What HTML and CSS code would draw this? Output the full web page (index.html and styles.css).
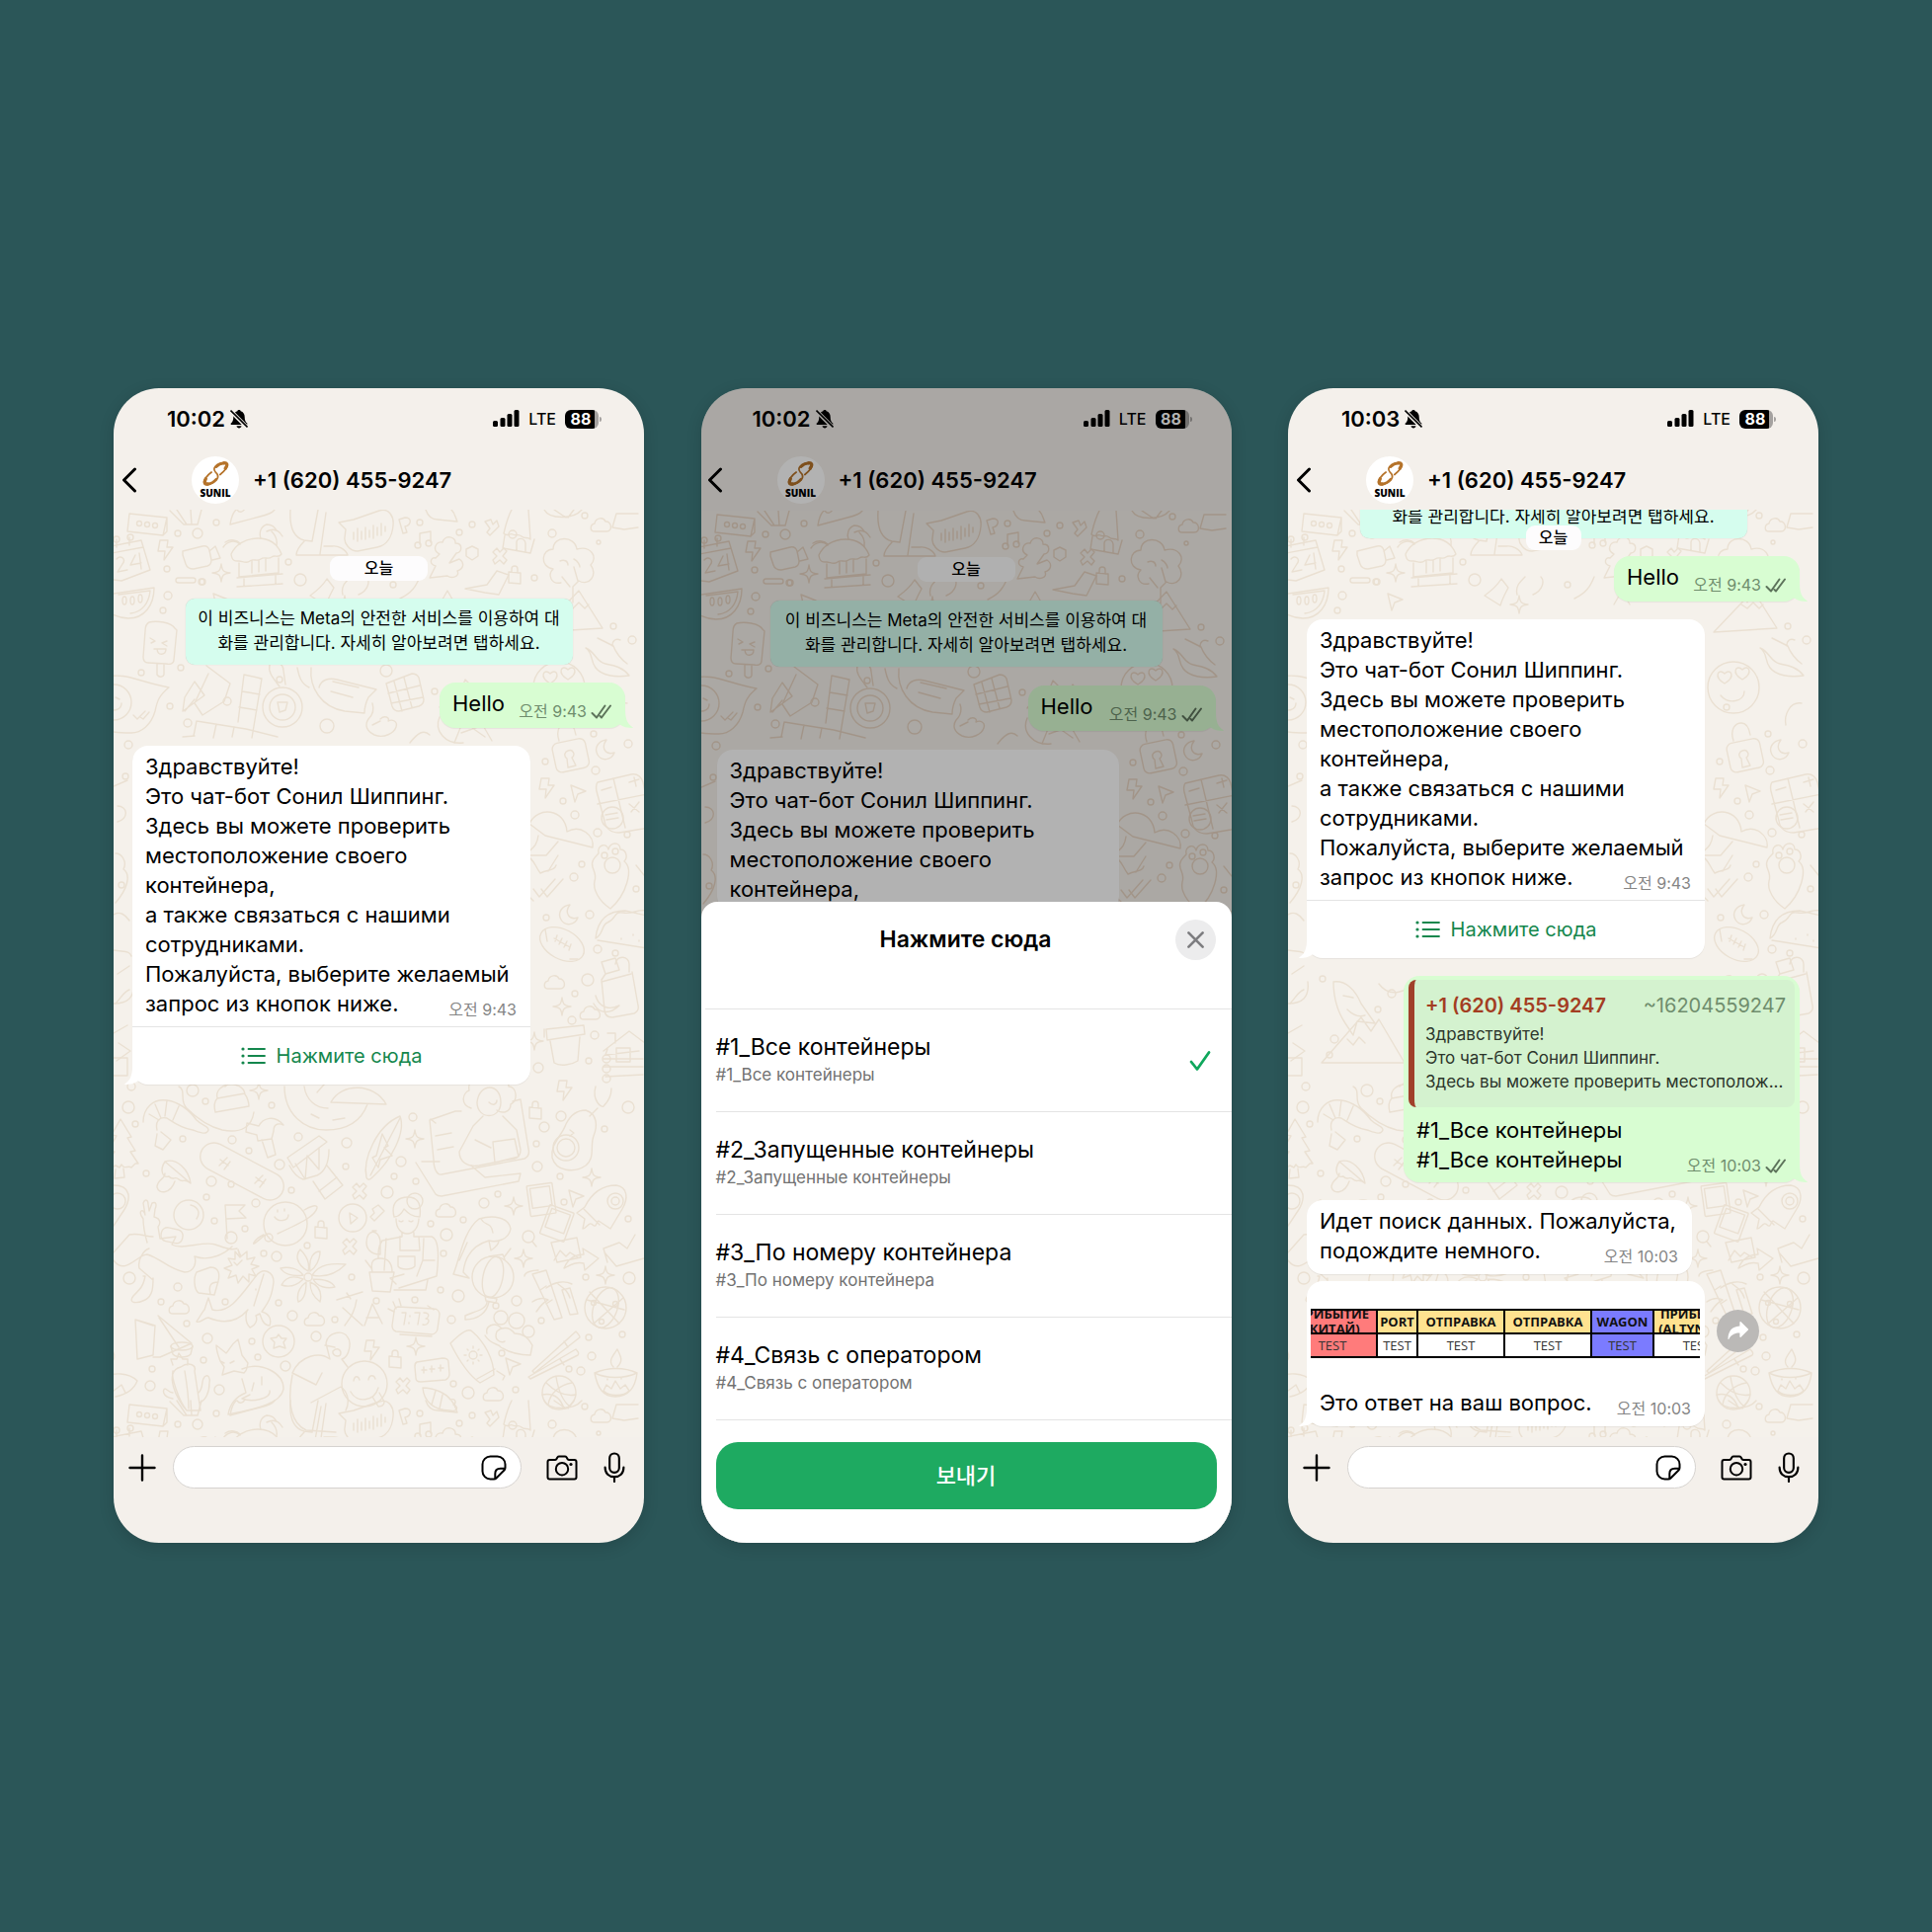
FILE: index.html
```html
<!DOCTYPE html>
<html lang="ru">
<head>
<meta charset="utf-8">
<meta name="viewport" content="width=device-width, initial-scale=1">
<title>Sonil Shipping chat bot</title>
<link rel="stylesheet" href="styles.css">
</head>
<body>
<svg class="sprite" aria-hidden="true">
  <defs>
    <symbol id="i-muted" viewBox="0 0 18 20">
      <path d="M9 1c.9 0 1.500.5 1.700 1.200 2.600.8 4 3 4 5.800 0 3.500.8 5 2.500 6.600.5.600.2 1.400-.6 1.400H1.400c-.8 0-1.100-.8-.6-1.400C2.500 13 3.300 11.500 3.300 8c0-2.800 1.400-5 4-5.800C7.500 1.500 8.100 1 9 1z" fill="#000"/>
      <path d="M6.500 17.300h5c-.3 1.300-1.200 2.200-2.500 2.200s-2.200-.9-2.500-2.200z" fill="#000"/>
      <path d="M0 1.500l17.500 17.500" stroke="var(--surface)" stroke-width="4"/>
      <path d="M.5 1.500l17 17" stroke="#000" stroke-width="1.600"/>
    </symbol>
    <symbol id="i-signal" viewBox="0 0 27 18">
      <rect x="0" y="11" width="5" height="6" rx="1.500"/><rect x="7.500" y="8" width="5" height="9" rx="1.500"/><rect x="14.500" y="4" width="5" height="13" rx="1.500"/><rect x="21.500" y="0" width="5" height="17" rx="1.500"/>
    </symbol>
    <symbol id="i-back" viewBox="0 0 16 26"><path d="M13.500 2L2.500 13l11 11" fill="none" stroke="#000" stroke-width="3" stroke-linecap="round" stroke-linejoin="round"/></symbol>
    <symbol id="i-logo" viewBox="-1 -1 30 28">
      <g fill="none" stroke="#b5732a" stroke-linecap="round">
        <path stroke-width="1.800" d="M9.500 11.500C4.500 15 .5 20.500 1.800 23.500c1.400 2.800 9 .8 13-4 3-3.800 1.200-6-1-8-2.600-2.500-1.800-5.300 1.700-8C19 1 25 .4 26 3c.8 2.500-2.500 7-7.500 11"/>
        <path stroke-width="3.400" d="M3.500 18.500C1.800 21.500 2 24 5.500 23.800M22.500 2c3.500-.4 4.300 1.500 1.500 5.500"/>
        <path stroke-width="2.600" d="M5.500 23.800c3-.2 6.500-2 9-5M22.500 2c-3 .2-6 1.700-8 4"/>
      </g>
    </symbol>
    <symbol id="i-ticks" viewBox="0 0 22 15"><path d="M1.500 9l4.500 4.500L14.500 1.500M9.500 12l1.500 1.500 9-12" fill="none" stroke="currentColor" stroke-width="2" stroke-linecap="round" stroke-linejoin="round"/></symbol>
    <symbol id="i-list" viewBox="0 0 25 18"><path d="M7.500 2H24M7.500 9H24M7.500 16H24" stroke="currentColor" stroke-width="1.800" stroke-linecap="round"/><g fill="currentColor"><circle cx="2" cy="2" r="1.600"/><circle cx="2" cy="9" r="1.600"/><circle cx="2" cy="16" r="1.600"/></g></symbol>
    <symbol id="i-plus" viewBox="0 0 28 28"><path d="M14 1.500v25M1.500 14h25" stroke="#000" stroke-width="2.400" stroke-linecap="round"/></symbol>
    <symbol id="i-sticker" viewBox="0 0 26 26"><path d="M9.500 1.500h7a8 8 0 0 1 8 8v3.600c0 .8-.2 1.500-.8 2.100l-8.500 8.500c-.6.600-1.300.8-2.100.8H9.500a8 8 0 0 1-8-8v-7a8 8 0 0 1 8-8z M24.300 13.700h-4.600c-3.700 0-5.400 1.800-5.400 5.400v5.200" fill="none" stroke="#000" stroke-width="2" stroke-linejoin="round"/></symbol>
    <symbol id="i-camera" viewBox="0 0 32 26"><path d="M3.500 5h5.300c.7 0 1.200-.3 1.600-.9l1.100-1.800c.4-.6.900-.9 1.600-.9h5.800c.7 0 1.200.3 1.600.9l1.100 1.800c.4.600.9.900 1.600.9h5.300c1.200 0 2 .8 2 2v15.600c0 1.200-.8 2-2 2h-25c-1.200 0-2-.8-2-2V7c0-1.200.8-2 2-2z" fill="none" stroke="#000" stroke-width="2"/><circle cx="16" cy="14.200" r="6.200" fill="none" stroke="#000" stroke-width="2"/><circle cx="25" cy="9.500" r="1.600"/></symbol>
    <symbol id="i-mic" viewBox="0 0 22 32"><rect x="6" y="1.500" width="10" height="20" rx="5" fill="none" stroke="#000" stroke-width="2.200"/><path d="M1.300 16c0 6.500 4 10 9.700 10s9.700-3.500 9.700-10M11 26v5" fill="none" stroke="#000" stroke-width="2.200" stroke-linecap="round"/></symbol>
    <symbol id="i-close" viewBox="0 0 20 20"><path d="M2.500 2.500l15 15M17.500 2.500l-15 15" stroke="#7d7d80" stroke-width="2.800" stroke-linecap="round"/></symbol>
    <symbol id="i-check" viewBox="0 0 22 22"><path d="M2 12l6 7.500L20 2.500" fill="none" stroke="#0fa75c" stroke-width="2.800" stroke-linecap="round" stroke-linejoin="round"/></symbol>
    <symbol id="i-forward" viewBox="0 0 24 22"><path d="M13.500 1.500c0-.8.8-1 1.300-.5l8 7.700c.4.400.4.900 0 1.300l-8 7.700c-.5.500-1.300.3-1.300-.5v-4C7.500 13 4 15.500 1.500 20c-.3.500-1 .4-1-.3C.7 11.500 4.500 6 13.500 5.500z" fill="#fff"/></symbol>
    <symbol id="i-tail" viewBox="0 0 20 18"><path d="M8 0C8 8 6 14 .5 17.200c-.4.300-.3.800.3.800C6 18 10.500 17 13.500 14.500L20 12V0z" fill="currentColor"/></symbol>

    <path id="d-star" d="M0-9C1-2 2-1 9 0C2 1 1 2 0 9C-1 2-2 1-9 0C-2-1-1-2 0-9z"/>
    <path id="d-cloud" d="M-8 6c-5 0-5-7 0-8c1-6 9-7 11-2c6-1 8 10 1 10z"/>
    <path id="d-arrow" d="M-7-7l15 6-8 3-3 8z"/>
    <path id="d-bolt" d="M-5-9h8l-1 7h6l-9 13 1-9h-7z"/>
    <path id="d-lock" d="M-6-3l12 1v11l-12-1zM-3-3v-3c0-4 6-4 6 0v4"/>
    <path id="d-cross" d="M-3-8l3 4 4-4 3 3-4 5 4 4-3 4-4-4-5 4-2-4 4-4-4-4z"/>
    <path id="d-heart" d="M0 6C-12-1-6-10 0-4C6-10 12-1 0 6z"/>
    <path id="d-moon" d="M2-10c-8 1-13 8-9 15s14 6 17-2c-9 3-14-5-8-13z"/>
    <g id="d-photo"><rect x="-13" y="-15" width="26" height="31" rx="1"/><rect x="-10" y="-12" width="20" height="20"/></g>

    <g id="doodles" fill="none" stroke="currentColor" stroke-width="1.400" stroke-linejoin="round" stroke-linecap="round">
      <!-- loose dots -->
      <g>
        <circle cx="104" cy="13" r="3"/><circle cx="65" cy="24" r="3"/><circle cx="85" cy="24" r="5"/><circle cx="310" cy="13" r="3"/><circle cx="350" cy="23" r="3"/><circle cx="363" cy="15" r="3"/><circle cx="477" cy="6" r="3"/><circle cx="444" cy="24" r="4"/><circle cx="491" cy="33" r="2"/><circle cx="54" cy="60" r="3"/><circle cx="90" cy="73" r="3"/><circle cx="177" cy="53" r="3"/><circle cx="189" cy="71" r="6"/><circle cx="283" cy="76" r="3"/><circle cx="426" cy="69" r="3"/><circle cx="55" cy="87" r="4"/><circle cx="50" cy="102" r="3"/><circle cx="444" cy="200" r="3"/><circle cx="506" cy="118" r="3"/><circle cx="525" cy="132" r="4"/><circle cx="68" cy="160" r="3"/><circle cx="28" cy="165" r="3"/><circle cx="57" cy="199" r="3"/><circle cx="115" cy="194" r="4"/><circle cx="75" cy="216" r="4"/><circle cx="216" cy="219" r="7"/><circle cx="276" cy="163" r="6"/><circle cx="325" cy="184" r="3"/><circle cx="15" cy="238" r="4"/><circle cx="486" cy="227" r="3"/><circle cx="521" cy="237" r="4"/>
        <circle cx="437" cy="255" r="3"/><circle cx="488" cy="264" r="4"/><circle cx="455" cy="295" r="3"/><circle cx="467" cy="309" r="4"/><circle cx="490" cy="327" r="4"/><circle cx="520" cy="329" r="3"/><circle cx="474" cy="359" r="3"/><circle cx="466" cy="372" r="4"/><circle cx="529" cy="384" r="3"/><circle cx="482" cy="410" r="4"/><circle cx="438" cy="413" r="3"/><circle cx="490" cy="445" r="4"/><circle cx="508" cy="449" r="3"/><circle cx="480" cy="476" r="6"/><circle cx="467" cy="490" r="3"/><circle cx="464" cy="517" r="4"/><circle cx="487" cy="532" r="4"/><circle cx="430" cy="565" r="5"/><circle cx="481" cy="558" r="3"/><circle cx="8" cy="380" r="3"/><circle cx="12" cy="270" r="3"/>
        <circle cx="35" cy="475" r="3"/><circle cx="105" cy="490" r="4"/><circle cx="91" cy="506" r="3"/><circle cx="47" cy="536" r="4"/><circle cx="42" cy="552" r="3"/><circle cx="18" cy="584" r="4"/><circle cx="15" cy="605" r="6"/><circle cx="80" cy="588" r="6"/><circle cx="93" cy="599" r="3"/><circle cx="22" cy="622" r="3"/><circle cx="70" cy="637" r="3"/><circle cx="160" cy="603" r="3"/><circle cx="120" cy="638" r="4"/><circle cx="187" cy="635" r="4"/><circle cx="137" cy="649" r="3"/><circle cx="168" cy="663" r="5"/><circle cx="236" cy="641" r="5"/><circle cx="235" cy="665" r="3"/><circle cx="303" cy="615" r="4"/><circle cx="291" cy="660" r="5"/><circle cx="284" cy="675" r="3"/><circle cx="306" cy="680" r="3"/><circle cx="277" cy="691" r="6"/><circle cx="33" cy="672" r="3"/><circle cx="99" cy="680" r="5"/><circle cx="119" cy="683" r="3"/><circle cx="94" cy="696" r="3"/><circle cx="144" cy="702" r="4"/><circle cx="180" cy="689" r="3"/><circle cx="102" cy="720" r="3"/><circle cx="133" cy="728" r="3"/><circle cx="375" cy="702" r="5"/><circle cx="354" cy="719" r="3"/><circle cx="389" cy="693" r="3"/><circle cx="429" cy="665" r="5"/><circle cx="452" cy="675" r="3"/><circle cx="453" cy="614" r="5"/><circle cx="436" cy="625" r="5"/><circle cx="428" cy="642" r="3"/><circle cx="521" cy="605" r="6"/><circle cx="497" cy="627" r="3"/><circle cx="456" cy="701" r="3"/><circle cx="521" cy="718" r="3"/><circle cx="337" cy="734" r="6"/><circle cx="321" cy="723" r="3"/><circle cx="334" cy="753" r="3"/><circle cx="165" cy="756" r="5"/><circle cx="152" cy="753" r="3"/><circle cx="196" cy="745" r="3"/><circle cx="241" cy="777" r="3"/><circle cx="65" cy="787" r="4"/><circle cx="16" cy="778" r="6"/><circle cx="48" cy="802" r="3"/><circle cx="113" cy="802" r="3"/><circle cx="167" cy="803" r="3"/><circle cx="181" cy="816" r="5"/><circle cx="224" cy="820" r="3"/><circle cx="266" cy="801" r="3"/><circle cx="305" cy="800" r="3"/><circle cx="331" cy="790" r="3"/><circle cx="349" cy="796" r="6"/><circle cx="408" cy="801" r="5"/><circle cx="387" cy="806" r="3"/><circle cx="342" cy="820" r="4"/><circle cx="522" cy="778" r="6"/><circle cx="478" cy="777" r="3"/><circle cx="433" cy="821" r="3"/><circle cx="95" cy="839" r="5"/><circle cx="74" cy="824" r="3"/><circle cx="140" cy="842" r="3"/><circle cx="146" cy="858" r="3"/><circle cx="174" cy="867" r="5"/><circle cx="205" cy="837" r="5"/><circle cx="91" cy="861" r="3"/><circle cx="39" cy="870" r="3"/><circle cx="37" cy="887" r="5"/><circle cx="107" cy="891" r="5"/><circle cx="481" cy="838" r="3"/><circle cx="484" cy="857" r="4"/><circle cx="473" cy="872" r="4"/><circle cx="461" cy="870" r="3"/><circle cx="359" cy="894" r="6"/><circle cx="344" cy="885" r="3"/><circle cx="407" cy="891" r="3"/><circle cx="393" cy="854" r="3"/><circle cx="515" cy="835" r="3"/>
      </g>
      <!-- small marks -->
      <use href="#d-bolt" x="52" y="40"/><use href="#d-star" x="109" y="64"/><use href="#d-cloud" x="495" y="16"/><use href="#d-arrow" x="108" y="92"/><use href="#d-cross" x="391" y="47"/><use href="#d-lock" x="406" y="66"/><use href="#d-star" x="234" y="96"/>
      <use href="#d-bolt" x="438" y="281"/><use href="#d-arrow" x="470" y="286"/><use href="#d-moon" x="497" y="243"/><use href="#d-moon" x="460" y="410"/><use href="#d-cloud" x="448" y="479"/><use href="#d-star" x="454" y="503"/><use href="#d-star" x="426" y="538"/><use href="#d-bolt" x="456" y="587"/><use href="#d-cloud" x="484" y="510"/>
      <use href="#d-star" x="147" y="588"/><use href="#d-star" x="305" y="637"/><use href="#d-lock" x="427" y="608"/><use href="#d-cross" x="249" y="690"/><use href="#d-star" x="484" y="676"/><use href="#d-star" x="405" y="705"/><use href="#d-arrow" x="468" y="696"/><use href="#d-cloud" x="338" y="710"/><use href="#d-lock" x="210" y="729"/><use href="#d-star" x="415" y="758"/><use href="#d-star" x="498" y="775"/><use href="#d-cloud" x="68" y="808"/><use href="#d-cloud" x="205" y="820"/><use href="#d-star" x="306" y="847"/><use href="#d-lock" x="285" y="860"/><use href="#d-arrow" x="404" y="866"/><use href="#d-cross" x="293" y="887"/><use href="#d-cross" x="239" y="746"/><use href="#d-bolt" x="261" y="850"/><use href="#d-cloud" x="386" y="896"/>
      <!-- first rows -->
      <path d="M16 4l38 4-4 18-36-4zM50 26l4-4V8"/><circle cx="26" cy="14" r="2.500"/><circle cx="34" cy="15" r="2.500"/><circle cx="42" cy="16" r="2.500"/>
      <path d="M57 1l14 14h14l4-15M64 0l10 15M78 0l1 15M118 15c1-7 3-12 6-15M118 15l30-8c8-2 13-4 15-7M125 0c3 4 6 2 8-1"/>
      <path d="M179 0c-1 15 2 28 14 31l8 1 6-32M193 32c-6 6-8 10-8 14h52c-2-6-10-10-16-9l-8 0M215 3l-6 42"/>
      <path d="M228 13l15-3 26-9c10-3 15 6 14 15-1 12-7 20-16 22l-20 4c-8 0-14-8-13-14l1-8z"/><path d="M243 23v7M247 19v13M251 22v8M255 18v12M259 21v7M263 16v13M267 18v8M271 14v12M275 17v5"/>
      <path d="M289 10l6-2c8 0 6 8 0 9l2 6-4 1zM310 35v-11l11-2v11"/><circle cx="308" cy="36" r="3"/><circle cx="319" cy="34" r="3"/><path d="M316 0c2 6 6 10 12 10l20 2c-2-4-2-8-6-12M376 12l6-2 2 5 4-4 2 6-9 9-3-3 3-4z"/>
      <path d="M395 24c2-8 3-14 8-24M395 24c4 4 6-1 9 1s6-1 9 2 6 0 9 3l-2-30M396 26l-2 13 28 5 4-14M408 41v-8c0-5 8-5 9 1v8"/><circle cx="404" cy="25" r="4"/>
      <path d="M436 0c5 10 30 10 38 0M446 0l12 8M466 0l-6 8M509 4l22 0M509 4l-4 14 12 2 14-2"/>
      <path d="M-8 38l36-7 9 30-29 11-16-2M3 30v8M16 28v8M-2 44l32-6"/><circle cx="3" cy="30" r="3"/><circle cx="17" cy="28" r="3"/><path d="M3 50c4-5 10 0 6 5l-5 8 10-2M22 46l-5 10 11-2M26 44l2 16"/>
      <path d="M70 42l20-5c4-1 6 1 7 4l2 10c0 3-1 5-4 6l-14 3c-5 0-7-2-8-5l-3-9zM97 42l6-5 5 12-8 2"/>
      <path d="M119 45c4-9 14-16 27-16s20 6 24 16c-4 5-6 0-10 3s-7-1-11 2-8-1-11 2-8 0-11 0-7 1-8-7zM127 54v14l40-4V49M125 69l46-4M132 68v9M164 66v9M125 78l46-3M140 52v12M147 51v12M154 50v12"/><path d="M149 29c-2-6 0-12 6-14 6 0 8 3 10 6M155 22c8-4 13 0 16 5M160 22c4 4 6 8 5 14M111 38c4-6 12-8 17-3M113 33c6-4 12-2 15 1"/>
      <rect x="63" y="69" width="20" height="5" rx="2.500"/><circle cx="89" cy="73" r="3"/>
      <path d="M363 37l6 3v7l-6 4-6-4v-7zM330 45c-8-4-4-13 3-12 2-8 14-6 13 1 8 0 7 9 1 10l-7 10 10-4c6 4 4 10-2 12 3 6-6 8-10 5l-18 2 6-12c-8-2-4-10 0-8zM356 80l22-4 10-14 12 4-10 20-14-2z"/>
      <path d="M453 74c-10 2-14-8-8-14-14-2-12-20 0-20 0-14 22-14 24 0 14-4 22 8 14 16 8 10-2 22-12 16l-6 6v16M462 78l-8-10M470 72l-4-14M452 52c4-2 8 0 8 4M466 50c4 2 6 6 6 8"/>
      <path d="M0 85l41-6c0 18-10 31-26 31-8 0-12-2-16-4M5 86l32-4c-1 12-8 22-20 23"/><ellipse cx="11" cy="92" rx="2" ry="4"/><ellipse cx="19" cy="92" rx="2" ry="4"/><ellipse cx="27" cy="90" rx="2" ry="4"/>
      <path d="M431 124l40-42 24 38zM459 96l6 4 6-6 6 6 4-4M216 70c-5 8-10 12-17 17l16 10c2-7 5-12 8-18zM240 68c-6 6-10 10-8 18M256 68c4 4 2 14-8 18M290 90c12-6 16-12 20-22M330 96l8-14 8 14"/>
      <path d="M36 114c8-2 22 0 26 6l2 2-3 30c0 4-4 5-8 4l-18-1c-4 0-5-3-5-6l2-26c0-5 2-8 4-9zM44 156v11c2 3 6 3 7 0v-10M37 130l5 3-4 2M54 133l-5 2 5 3M41 141h12c0 6-8 8-9 0"/>
      <path d="M94 158l24 18-6 18-22 14-8-12 14-30M72 190l10-16 10 14-22 16zM72 204l10-12"/>
      <path d="M-10 170c22-6 34 4 66 10-10 8-12 14-14 24-4 14-14 22-24 22s-22 0-28-4"/><circle cx="0" cy="195" r="18"/><path d="M2 190l4 2M-6 200c6 6 14 2 14-4M20 208l4 4 8-8M27 210l3 2 6-7"/>
      <path d="M132 167l18 4-10 60M132 167l-6 48M150 171l-2 0M130 184l18 3M127 200l18 3M84 214l50 8 32 8M84 214l-3 15M104 217l-3 14M122 220l-2 10M70 230l12-1"/>
      <circle cx="171" cy="200" r="20"/><circle cx="171" cy="200" r="13"/><path d="M168 205l-2-10 10 0-2 8zM168 179c-6-8-12-14-10-22s14-2 14 6l2 14"/><circle cx="168" cy="172" r="3"/>
      <path d="M200 160c-2 20 10 40 34 44l20 2c0-8 2-12 4-16l8-8-40-10c-8-2-16 0-18 8M222 174l26 6M220 184l22 6M186 160c2 10 4 16 12 20"/>
      <path d="M276 176l26-10c4 0 6 2 7 4l5 22c0 4-2 6-5 7l-20 5c-4 0-6-2-7-5zM284 174l8 30M294 170l8 30M278 186l32-8M281 196l32-6"/>
      <path d="M262 196c2 6 0 12-4 16-4 6-2 12 6 16 10 4 20-2 22-8s-4-8-8-6c2-4-4-6-8-2M270 214l-8 4M330 210c-6 14 6 28 24 26M300 236c8-10 14-14 20-8M345 236l16-40 22 38M352 226l28-10M356 216l20 14M330 200l10-14 8 6 8-20 14 14 6-10 12 16"/>
      <circle cx="451" cy="180" r="26"/><use href="#d-heart" x="442" y="170"/><use href="#d-heart" x="460" y="166"/><path d="M438 188c8 10 24 6 24-4"/>
      <path d="M478 140c10 4 10 14 20 16s18 4 24 12c-14 2-28 0-34-8s-2-14-10-20zM490 130l16 8c2 6 8 14 14 18M505 138c0-6 4-8 8-6M520 196c-12-2-18 12-16 22"/>
      <!-- right edge, middle rows -->
      <rect x="446" y="234" width="34" height="30" rx="6" transform="rotate(-12 462 250)"/><path d="M451 234c-4-12 2-18 8-18s8 6 9 12M460 244c5-2 8 4 4 7l4 8-8 2-1-9c-4-3-2-7 1-8z"/>
      <path d="M490 276l34-8c6-1 10 2 12 8l8 36c0 6-4 10-8 11l-24 4c-8 0-14-4-15-12l-8-30c-1-4 0-8 1-9zM490 298l50-10M506 272l12 50M494 284l10-3M522 276l10-3M527 271l2 9M522 298l10 8M532 296l-8 10"/><circle cx="505" cy="312" r="11"/><path d="M498 309l12-2M499 314l12-2"/>
      <path d="M421 318c8-18 36-16 38 8 14-8 28 4 26 16l-48-12zM430 330c-2 14-8 12-12 20 8 4 8 10 14 18 8-4 14-2 16-8M422 350l16 0 12-14M440 366l10-16"/>
      <path d="M491 348c-2-8 8-12 10-4 2-8 12-8 12 0 6 0 8 8 4 12 10 8 2 34-14 48-12-8-18-20-16-28 2-6 0-8-2-14s2-10 6-14z"/><circle cx="505" cy="360" r="8"/><circle cx="497" cy="350" r="3"/><circle cx="508" cy="346" r="3"/>
      <path d="M425 384l6 8 16-18M433 384l6 8 16-18M419 390l6 6M529 360l8 10"/>
      <ellipse cx="454" cy="440" rx="24" ry="15" transform="rotate(28 454 440)"/><path d="M446 434l16 9M449 431l-2 6M454 434l-3 6M459 437l-3 6M463 440l-2 6M437 425l2 12M470 455l-8 0"/>
      <path d="M488 434c2-20 14-28 30-28l26 6M488 434c8-4 6-14 12-16 10-4 6-12 16-10s14-4 24-2M490 436l50 8M514 434v1M526 430v1M532 436v1"/>
      <path d="M498 470l-4 6 3 30c0 6 4 8 8 8l22-4c4-2 5-4 4-8l-6-34M498 470l-4-12 14-4 4 12zM508 460c2-10 14-8 14 0v8M494 478l30-8M488 492c4 14 16 14 24 10M486 500c6 12 18 10 26 2"/>
      <path d="M438 526l38-4 1 9-38 6zM442 538l4 22c6 4 18 2 24-2l2-24M436 526l0 8"/>
      <path d="M496 548l26-20 16 12M500 546l-2 6 34-4M496 556h40M496 564h40M498 574l38-2M509 545v14h14v-14zM500 530l8 0v10"/><circle cx="499" cy="556" r="4"/><circle cx="499" cy="566" r="4"/><circle cx="499" cy="576" r="4"/>
      <!-- left edge, middle rows -->
      <path d="M2 348c6 0 12 8 8 16 8 6 4 20-8 34M0 410c6-4 12 0 16 6M0 446c10 2 16 0 18 6M4 470l12-8M2 500c6-6 8-12 14-14M0 530l14-8M0 555h14v18H0M0 280l14-6M4 300c10 0 12 12 0 16"/>
      <path d="M46 478c12-2 22 8 28 22l14 20-18-2-4 14-8-12c-8-12-12-28-12-42zM56 492l10 2M60 506c6 6 12 8 18 6M34 560l40-46 10 14 8-12 26 44zM60 536l6 6 6-8 6 6M5 540l12 8-14 10M0 500c14 0 22-6 20-22M92 480c10 14 30 10 34-4"/>
      <!-- lower half -->
      <path d="M103 610c-2-8 0-12 2-14-4-16 26-20 28-4 2 2 4 8 4 12zM105 596l28-5M113 584l8-6 4 5"/>
      <path d="M30 620c0-14 10-24 24-22 14 2 24 12 30 20 6 6 12 6 12 10-2 6-10 2-16 0-12-2-20-8-26-12-8-2-12 4-10 12M36 612l10 6M42 602l6 14M54 598l-2 16M66 604l-6 14M44 632l-2 12 8 4 8-10-10-8M66 584c8 4 0 14 8 22s20 18 36 22c20 4 30-4 32-18"/>
      <path d="M7 617l-9 16 5 1-8 14 6 2-9 14c4 4 8 1 10 0l4 2 2-3c4 6 6 0 10 3l4-4 3 0-8-12 5-1-8-13 4-1zM2 668l-1 9 10-1-1-9"/>
      <path d="M134 630l1-9 12 3c4-8 16-12 25-1-4-2-10-2-10 6l-2 8-14 2-1-6zM150 638l6 18 8-3-4-17"/>
      <rect x="84" y="656" width="92" height="28" rx="14" transform="rotate(28 130 670)"/><path d="M107 664l8-8M112 668l6-8M108 658l8 6M143 682l8-8M148 686l6-8M144 676l8 6"/>
      <path d="M173 584c0 28 20 44 42 44s36-10 42-26M193 584c2 14 12 22 24 22M220 600c10-20 44-20 56 2zM206 590l14-16 24 4M200 612l8 4M222 618l12-2"/>
      <path d="M290 614c6 16-8 44-28 62-3 3-5 3-6 0-4-18 10-52 34-62zM260 674l30-58M272 632l6 12-4 2 8 8-12 4-2 8-6-10 4-2z"/>
      <path d="M176 656l32-22 8 6-34 26zM178 664c4 8 8 12 14 14l14-4c8-4 12-12 12-26M184 662l10 16 2-24 12 14 0-22M202 680l12 18 18-14-16-20M208 690l18-14"/>
      <path d="M320 618l26-9M320 618l4 40c0 10 4 16 8 15l84-16c4-2 5-6 4-10l-8-50-8 2M346 609l6 0M306 661l20 32c2 2 4 2 6 2l78-15 2-8-36 4-14-12M312 660h18M326 634l16-3M328 648l16-3M321 617l5 4"/><path d="M362 606c-12-4-8-16-2-18-2-10 8-16 16-10 8-8 24-4 24 6 8 0 10 14 2 18 0 8-8 10-14 6"/><path d="M368 600c0 18 24 18 24 0 0-20-22-20-24 0zM374 614l-10 10-14 26c0 10 8 16 20 14l30-6M394 614l14 14 4 20c0 8-6 10-12 10M366 638l16 8M384 640l22-3 4 18-24 6zM380 600c4 4 8 2 8-2"/>
      <path d="M478 608c12 4 12 16 8 26s2 22-8 30c-12 8-30 6-34-8-2-14 10-22 14-34 4-8 10-14 20-14zM482 614l8-8M488 584c-4 14 6 22 8 20s8-8 8-18"/><circle cx="458" cy="646" r="13"/><circle cx="458" cy="646" r="9"/><path d="M462 628l4 3-4 3"/>
      <path d="M52 660c12-4 24 8 26 22-6-6-8 0-12-4s-6 2-10-3c-6 2-10-6-4-15zM52 672c0 6-8 6-8 14 2 8 14 6 18-6M52 660l26 22"/>
      <path d="M509 684c-16 0-26 10-32 22l-8 6 8 6-2 10c4 0 6-8 10-4s4-4 6-4l12 8 12-20c6-10 6-22-6-24zM476 708l16 16"/><circle cx="508" cy="700" r="8"/><circle cx="508" cy="700" r="4"/>
      <circle cx="4" cy="700" r="8"/><path d="M0 684c18 0 18 14 10 26L0 725"/>
      <circle cx="76" cy="714" r="15"/><path d="M78 704c8 2 10 8 6 14M34 742c-4-14-4-22-4-24-6-8 0-12 2-4l-2-12c2-5 5-3 5 1l1 7 3-8c4-2 5 2 3 6l-1 8c8 2 6 8 4 10l2 12 16-2-4 8c10 6 32-4 44 0s16 6 22 4M0 752l16-18c10-2 16 2 24 2M0 760c12 16 24-6 34-6 14 4 20 14 38 18 10 0 12-10 10-16M40 780l-14-12c-2-8 4-18 10-20M30 776l2 0c-2 10-4 12-12 20-6 8 4 8 12 4s8-14 8-22M82 756c16 6 32-4 38-10"/><rect x="48" y="728" width="22" height="14" rx="6" transform="rotate(12 60 735)"/><path d="M115 738l-2-34 20 0-6 6 7 7-20 1"/><circle cx="119" cy="737" r="6"/>
      <circle cx="174" cy="723" r="22"/><path d="M154 734c-8 6-14 12-12 8s6-6 10-8M193 709c6-4 14-6 13-2-2 8-14 14-40 26M166 709v2M173 708v2M163 716c4 6 14 4 14-2"/><circle cx="157" cy="737" r="4"/>
      <circle cx="242" cy="717" r="14"/><path d="M239 712l8 5-7 6zM262 708l6-4 6 6-10 10-4-4 4-4z"/>
      <circle cx="305" cy="700" r="8"/><path d="M284 716c-4-16 6-20 14-20s14 4 12 20c-8 0-12-4-16-8-2 4-6 8-10 8zM286 718c0 20 22 20 23 0M289 720c2 2 4 0 4 0M299 720c2 2 4 0 4 0M292 732v4l-20 4c-4 6-4 10-4 18M304 732v4l18 0c6 2 8 16 5 40l-38 12M276 738l-2 32M290 736v14h20l-1-14M314 738l-1 22-6 16M288 756h17v10c-4 4-14 4-17 0zM313 760l12 0M286 784l-6-6 14-4M259 772h25l-4 20-18-1zM262 772c-2-10 0-14 8-14s12 4 12 14M256 742c0-14 12-14 14-2l0 14c-10 0-14-6-14-12zM262 730l4 0M255 760l6 8M284 790h32l2-10"/>
      <path d="M370 718c14-4 30-2 32 10-2 12-16 14-22 12-14 4-24 14-26 32l6 6-16-4c6-14 10-44 26-56zM372 718c4 8 10 2 12 14M380 740l2 10c6-4 8-8 8-10M358 742l-8 18"/>
      <circle cx="384" cy="777" r="21"/><ellipse cx="384" cy="777" rx="10" ry="21" transform="rotate(12 384 777)"/><path d="M380 756l14-2 2 5M376 796l12 3-1 4-10-2zM396 756l6-8M378 802c0 8-14 10-22 14l0 4c14 0 22-8 24-18"/>
      <use href="#d-photo" x="433" y="698" transform="rotate(-8 433 698)"/><use href="#d-photo" x="449" y="722" transform="rotate(20 449 722)"/><path d="M443 742l26-5 4 20-24 5zM446 760l6-10 6 6 4-4 8 5M456 768c4-10 12-14 20-14l-1-6 16 10-14 12-1-7c-8-2-14 2-20 5z"/><circle cx="420" cy="736" r="6"/><path d="M424 741l4 5"/>
      <path d="M500 762l-4-14 16-6 8 6 8-14M497 752l12 14 28-8"/>
      <path d="M126 749l3 7 6-5 0 8 8-2-4 7 8 2-7 3 4 7-7-2 0 8-6-6-5 7-2-8-8 3 3-7-7-3 8-3-4-7 7 1 0-8 5 6zM122 762l3 3 5-5"/>
      <path d="M84 772l14-5c8 0 10 6 8 14l-4 14-16-2c-5-4-5-16-2-21zM106 782c-8 0-10 4-8 12"/>
      <path d="M197 771c-14-8-12-18-8-22 6 6 10 14 8 22M199 771c-2-14 4-20 10-20 0 8-4 16-10 20M201 775c8-12 20-12 34-11-8 8-20 14-34 11M202 779c14 0 20 4 22 8-8 2-18 0-22-8M199 782c10 4 12 12 10 20-8-6-10-12-10-20M195 782c0 10-2 18-8 20-2-8 0-14 8-20M192 779c-8 8-16 8-22 6 4-8 12-10 22-6M192 775c-12 2-20-2-23-7 8-2 18 0 23 7"/><circle cx="197" cy="777" r="4"/>
      <path d="M144 776c8-10 18-4 18 6-2 18-8 24-12 30 8 2 10 8 8 14-6 0-8-6-10-12l-4 2c2 4 0 10-6 12-6-6-4-16-2-18-12 14-26 14-40 8-4 0-8 6-12 4 4-6 6-10 8-12l4-12 4 12c16 4 26-10 44-34zM152 774l-10 32"/><path d="M144 789v1"/>
      <path d="M424 774l14-4 16 48-8 2zM430 770c-6 0-14 2-14 6M438 786l-6 4M444 800l-6 4M454 790l8-2 8 26-8 1zM438 788c8-6 18-8 26-4M450 784c8 6 10 8 12 14M424 802c6-4 12-4 16-2M428 812c4-6 8-10 12-12"/>
      <circle cx="498" cy="808" r="21"/><ellipse cx="498" cy="808" rx="12" ry="21" transform="rotate(20 498 808)"/><path d="M479 800l38 10M482 792l30 32M486 824l30-26"/><circle cx="486" cy="803" r="2.500"/><circle cx="508" cy="804" r="2.500"/><circle cx="494" cy="822" r="2.500"/>
      <path d="M226 800l26-8M236 793l4 6M246 800c-2 14-8 20-12 26M232 808l20 18M254 826l8-22 10 20M256 818l12 0M283 802l3 7M289 799l2 7M278 809l6 3"/>
      <path d="M288 807l36 2c4 0 6 3 6 6l-2 14c0 3-3 6-6 6l-36-3c-3-1-4-3-4-6l2-14c0-3 2-5 4-5zM318 806l6 4M290 835l32 2M292 813l4 0-2 12M300 816v1M299 823v1M305 813h5l-2 12M314 813c8 0 4 6 2 6 6 0 2 8-3 6"/>
      <circle cx="167" cy="842" r="16"/><path d="M167 835l3 4 5 0-3 4 2 6-6-2-6 2 1-6-4-4 6-1z"/>
      <path d="M22 820l2 40 16-4 2-30zM45 816l34 28-32 14-7 0M22 820l18 6M46 818l20 30"/><ellipse cx="69" cy="847" rx="11" ry="4"/><path d="M58 847l2 8c4 4 14 4 18 0l2-8M-10 860c2-6 4-8 8-10 4 6 4 10-1 14M-14 880c14-8 30-6 38 2-4 10-12 14-22 16M0 892l8-6 4 8"/>
      <path d="M104 846l10 8c4-4 4-8 12-14l4 16 6 8c-2 8 0 6-4 10l-10-2-12 4 2-8-4-6c-2-6-4-10-4-16zM108 862l4 2M118 864l4-2M130 870c20-8 42 4 42 20-2 14-24 20-56 26 2-12 8-18 18-22l-4-14M138 896l-8 4c10 4 30 0 28-8M142 884l-2 8M150 886v-8"/>
      <path d="M68 868c8-6 16-2 14 4l6 40h-14c-10-10-24-40-6-44zM60 872c-2 6 6 30 14 40M72 872c2 12 4 30 4 38M86 894c6-6 2-12 6-16s6 2 5 6c0 10-4 18-10 20M60 900c-12-2-10-10-8-10s4 4 8 4M60 866l-2-6 6 0 2-6 4 6 5 0 0 6"/>
      <circle cx="254" cy="885" r="23"/><path d="M243 882c1-6 5-5 6-1M258 881c1-6 6-5 7-1M240 893c6 12 24 10 28-4M262 898l6 10c4 0 6-2 6-5l-5-9M181 874c8-18 28-22 38-14l-4-16c2-12 18-14 22-6 4 4 2 20-6 22l6 8M181 874l24 12 6-12M214 846l10 2M222 852c4-4 8-2 8 2s-6 4-8 0zM181 876c-6 30 0 50 14 56l30 2M200 904l30-16c6 4 10 14 5 24M210 908l-6 34"/>
      <path d="M341 844c10-10 18-16 22-12 12 10 22 28 22 44l-14 8c-12-8-22-24-30-40zM368 880l18-10M388 872l8 5-2 4"/><circle cx="364" cy="856" r="4"/><path d="M364 847v2M364 863v2M355 856h2M371 856h2M358 850l1 1M370 862l-1-1M370 850l-1 1M358 862l1-1"/>
      <circle cx="392" cy="818" r="7"/><circle cx="408" cy="821" r="8"/><circle cx="420" cy="832" r="6"/><path d="M378 834c-2-8 8-12 14-6M376 836c6 10 14 8 16 12 10 6 22 8 30 8l2-10c-4-8-10-12-18-12-6-8-14-6-18-2-4 10 6 12 8 10"/>
      <path d="M424 872l44-40c2 2 4 4 4 6l-46 36zM420 878l48-28c2 2 4 4 2 6l-48 24zM456 842l4 6M452 860l4 6"/>
      <circle cx="451" cy="894" r="17"/><path d="M438 884c10 10 20 14 30 12M440 906c2-12 12-20 24-22M448 878c2 12 6 24 14 30M434 896c10-2 18 2 22 14"/>
      <path d="M487 874c14-6 30-6 43 0-2 16-10 24-22 24s-18-8-21-24zM487 874c12 6 30 6 43 0M506 868c-6-6 0-12 4-18 4 8 6 12 0 18M496 892c6 6 20 6 26 0l-4-6-5 4-5-8-4 8-5-4z"/><path d="M500 880v1M514 879v1"/>
      <path d="M307 863l26-4c4 0 6 2 6 4l1 12c0 4-2 5-4 6l-25 2c-4 0-5-2-5-4l-1-11c0-3 0-4 2-5zM312 871h5M314 868v6M320 870h5M322 867v6M329 869h5M331 866v6"/>
      <path d="M313 889c12 0 24 6 28 12 6-2 6 4 3 5 6 2 4 8-4 6-14 0-26-8-27-23zM326 892l-4 14M333 896l-3 14"/>
    </g>
    <g id="paper"><use href="#doodles"/><use href="#doodles" y="902"/></g>
  </defs>
</svg>

<main class="stage">
  <section class="phone" aria-label="Чат">
    <header class="top">
      <div class="status"><span class="clock">10:02</span><svg class="muted"><use href="#i-muted"/></svg><svg class="signal"><use href="#i-signal"/></svg><span class="network">LTE</span><span class="battery"><b class="charge">88</b></span></div>
      <div class="nav"><button class="back" aria-label="Назад"><svg><use href="#i-back"/></svg></button><span class="avatar"><svg><use href="#i-logo"/></svg><b>SUNIL</b></span><h2 class="name">+1 (620) 455-9247</h2></div>
    </header>
    <div class="chat">
      <svg class="wallpaper" aria-hidden="true"><use href="#paper"/></svg>
      <p class="day">오늘</p>
      <p class="notice">이 비즈니스는 Meta의 안전한 서비스를 이용하여 대<br>화를 관리합니다. 자세히 알아보려면 탭하세요.</p>
      <div class="bubble out short"><svg class="tail"><use href="#i-tail"/></svg><p class="text">Hello</p><span class="time">오전 9:43<svg class="ticks"><use href="#i-ticks"/></svg></span></div>
      <div class="bubble in menu"><svg class="tail"><use href="#i-tail"/></svg>
        <div class="body"><p class="text">Здравствуйте!<br>Это чат-бот Сонил Шиппинг.<br>Здесь вы можете проверить<br>местоположение своего<br>контейнера,<br>а также связаться с нашими<br>сотрудниками.<br>Пожалуйста, выберите желаемый<br>запрос из кнопок ниже.</p><span class="time">오전 9:43</span></div>
        <button class="choose"><svg class="list"><use href="#i-list"/></svg>Нажмите сюда</button>
      </div>
    </div>
    <footer class="composer">
      <button class="plus" aria-label="Добавить"><svg><use href="#i-plus"/></svg></button>
      <div class="field"><input type="text" aria-label="Сообщение"><button class="sticker" aria-label="Стикеры"><svg><use href="#i-sticker"/></svg></button></div>
      <button class="camera" aria-label="Камера"><svg><use href="#i-camera"/></svg></button>
      <button class="mic" aria-label="Голосовое сообщение"><svg><use href="#i-mic"/></svg></button>
    </footer>
  </section>

  <section class="phone with-sheet" aria-label="Выбор запроса">
    <header class="top">
      <div class="status"><span class="clock">10:02</span><svg class="muted"><use href="#i-muted"/></svg><svg class="signal"><use href="#i-signal"/></svg><span class="network">LTE</span><span class="battery"><b class="charge">88</b></span></div>
      <div class="nav"><button class="back" aria-label="Назад"><svg><use href="#i-back"/></svg></button><span class="avatar"><svg><use href="#i-logo"/></svg><b>SUNIL</b></span><h2 class="name">+1 (620) 455-9247</h2></div>
    </header>
    <div class="chat">
      <svg class="wallpaper" aria-hidden="true"><use href="#paper"/></svg>
      <p class="day">오늘</p>
      <p class="notice">이 비즈니스는 Meta의 안전한 서비스를 이용하여 대<br>화를 관리합니다. 자세히 알아보려면 탭하세요.</p>
      <div class="bubble out short"><svg class="tail"><use href="#i-tail"/></svg><p class="text">Hello</p><span class="time">오전 9:43<svg class="ticks"><use href="#i-ticks"/></svg></span></div>
      <div class="bubble in menu"><div class="body"><p class="text">Здравствуйте!<br>Это чат-бот Сонил Шиппинг.<br>Здесь вы можете проверить<br>местоположение своего<br>контейнера,</p></div></div>
    </div>
    <div class="scrim"></div>
    <form class="sheet">
      <div class="sheet-head"><h3>Нажмите сюда</h3><button type="button" class="close" aria-label="Закрыть"><svg><use href="#i-close"/></svg></button></div>
      <label class="option"><span class="option-text"><span class="option-title">#1_Все контейнеры</span><small>#1_Все контейнеры</small></span><input type="radio" name="request" checked><svg class="check"><use href="#i-check"/></svg></label>
      <label class="option"><span class="option-text"><span class="option-title">#2_Запущенные контейнеры</span><small>#2_Запущенные контейнеры</small></span><input type="radio" name="request"><svg class="check"><use href="#i-check"/></svg></label>
      <label class="option"><span class="option-text"><span class="option-title">#3_По номеру контейнера</span><small>#3_По номеру контейнера</small></span><input type="radio" name="request"><svg class="check"><use href="#i-check"/></svg></label>
      <label class="option"><span class="option-text"><span class="option-title">#4_Связь с оператором</span><small>#4_Связь с оператором</small></span><input type="radio" name="request"><svg class="check"><use href="#i-check"/></svg></label>
      <button type="button" class="send">보내기</button>
    </form>
  </section>

  <section class="phone scrolled" aria-label="Ответ бота">
    <header class="top">
      <div class="status"><span class="clock">10:03</span><svg class="muted"><use href="#i-muted"/></svg><svg class="signal"><use href="#i-signal"/></svg><span class="network">LTE</span><span class="battery"><b class="charge">88</b></span></div>
      <div class="nav"><button class="back" aria-label="Назад"><svg><use href="#i-back"/></svg></button><span class="avatar"><svg><use href="#i-logo"/></svg><b>SUNIL</b></span><h2 class="name">+1 (620) 455-9247</h2></div>
    </header>
    <div class="chat">
      <svg class="wallpaper" aria-hidden="true"><use href="#paper"/></svg>
      <p class="day">오늘</p>
      <p class="notice">이 비즈니스는 Meta의 안전한 서비스를 이용하여 대<br>화를 관리합니다. 자세히 알아보려면 탭하세요.</p>
      <div class="bubble out short"><svg class="tail"><use href="#i-tail"/></svg><p class="text">Hello</p><span class="time">오전 9:43<svg class="ticks"><use href="#i-ticks"/></svg></span></div>
      <div class="bubble in menu"><svg class="tail"><use href="#i-tail"/></svg>
        <div class="body"><p class="text">Здравствуйте!<br>Это чат-бот Сонил Шиппинг.<br>Здесь вы можете проверить<br>местоположение своего<br>контейнера,<br>а также связаться с нашими<br>сотрудниками.<br>Пожалуйста, выберите желаемый<br>запрос из кнопок ниже.</p><span class="time">오전 9:43</span></div>
        <button class="choose"><svg class="list"><use href="#i-list"/></svg>Нажмите сюда</button>
      </div>
      <div class="bubble out reply"><svg class="tail"><use href="#i-tail"/></svg>
        <blockquote class="quote"><div class="quote-head"><b>+1 (620) 455-9247</b><span>~16204559247</span></div><p>Здравствуйте!<br>Это чат-бот Сонил Шиппинг.<br>Здесь вы можете проверить местополож...</p></blockquote>
        <div class="body"><p class="text">#1_Все контейнеры<br>#1_Все контейнеры</p><span class="time">오전 10:03<svg class="ticks"><use href="#i-ticks"/></svg></span></div>
      </div>
      <div class="bubble in wait"><div class="body"><p class="text">Идет поиск данных. Пожалуйста,<br>подождите немного.</p><span class="time">오전 10:03</span></div></div>
      <div class="answer-row">
        <div class="bubble in answer"><svg class="tail"><use href="#i-tail"/></svg>
          <div class="shot">
            <table>
              <thead><tr><th class="red"><div>ПРИБЫТИЕ<br>(КИТАЙ)</div></th><th><div>PORT</div></th><th><div>ОТПРАВКА</div></th><th><div>ОТПРАВКА</div></th><th class="blue"><div>WAGON</div></th><th><div>ПРИБЫТИЕ<br>(ALTYNKOL)</div></th></tr></thead>
              <tbody><tr><td class="red">TEST</td><td>TEST</td><td>TEST</td><td>TEST</td><td class="blue">TEST</td><td>TEST</td></tr></tbody>
            </table>
          </div>
          <div class="body"><p class="text">Это ответ на ваш вопрос.</p><span class="time">오전 10:03</span></div>
        </div>
        <button class="forward" aria-label="Переслать"><svg><use href="#i-forward"/></svg></button>
      </div>
    </div>
    <footer class="composer">
      <button class="plus" aria-label="Добавить"><svg><use href="#i-plus"/></svg></button>
      <div class="field"><input type="text" aria-label="Сообщение"><button class="sticker" aria-label="Стикеры"><svg><use href="#i-sticker"/></svg></button></div>
      <button class="camera" aria-label="Камера"><svg><use href="#i-camera"/></svg></button>
      <button class="mic" aria-label="Голосовое сообщение"><svg><use href="#i-mic"/></svg></button>
    </footer>
  </section>
</main>
</body>
</html>
```
FILE: styles.css
```css
:root {
  --surface: #f4f0eb;
  --paper: #f5f1eb;
  --doodle: #eae0d2;
  --out: #d8fdd2;
  --green: #1eaa61;
}

* { box-sizing: border-box; }

body {
  margin: 0;
  background: #2b5658;
  color: #000;
  font-family: Inter, "Noto Sans CJK KR", sans-serif;
}

h2, h3, p, blockquote { margin: 0; }

button {
  padding: 0;
  border: 0;
  background: none;
  font: inherit;
  color: inherit;
  cursor: pointer;
}

svg { display: block; }
button svg { width: 100%; height: 100%; }
.sprite { display: none; }

.stage {
  min-height: 100vh;
  padding: 24px 115px 25px;
  display: grid;
  grid-template-columns: repeat(3, minmax(0, 537px));
  justify-content: space-between;
  align-items: center;
}

.phone {
  position: relative;
  aspect-ratio: 537 / 1169;
  display: flex;
  flex-direction: column;
  overflow: hidden;
  border-radius: 46px;
  background: var(--surface);
  box-shadow: 0 4px 16px rgba(0, 0, 0, .14);
}

/* status bar and contact bar */
.status {
  height: 62px;
  padding: 0 43px 0 54px;
  display: flex;
  align-items: center;
}
.clock { font-size: 22px; font-weight: 600; }
.muted { width: 18px; height: 20px; margin-left: 5px; }
.signal { width: 27px; height: 18px; margin-left: auto; }
.network { margin: 0 9px; font-size: 16px; font-weight: 500; }
.battery {
  position: relative;
  width: 34px;
  height: 19px;
  margin-right: 3px;
  border-radius: 6px;
  background: linear-gradient(90deg, #000 88%, #a5a2a0 88%);
}
.battery::after {
  content: "";
  position: absolute;
  left: 35px;
  top: 7px;
  width: 2px;
  height: 5px;
  border-radius: 0 2px 2px 0;
  background: #a5a2a0;
}
.charge {
  display: block;
  padding-right: 2px;
  font-size: 16px;
  line-height: 19px;
  font-weight: 700;
  text-align: center;
  color: #fff;
}

.nav {
  height: 61px;
  padding-left: 8px;
  display: flex;
  align-items: center;
}
.back { width: 16px; height: 26px; }
.avatar {
  width: 48px;
  height: 48px;
  margin: 0 14px 0 55px;
  display: flex;
  flex-direction: column;
  align-items: center;
  border-radius: 50%;
  background: #fff;
}
.avatar svg { width: 29px; height: 27px; margin-top: 4px; }
.avatar b { font: 800 10px/12px "Open Sans", sans-serif; }
.name { font-size: 22px; line-height: 26px; font-weight: 600; white-space: nowrap; }

/* conversation */
.chat {
  position: relative;
  flex: 1;
  min-height: 0;
  padding: 47px 19px 11px;
  display: flex;
  flex-direction: column;
  gap: 18px;
  overflow: hidden;
  background: var(--paper);
}
.chat > * { flex-shrink: 0; }
.wallpaper {
  position: absolute;
  inset: 0;
  width: 100%;
  height: 100%;
  color: var(--doodle);
}
.day, .notice {
  position: relative;
  align-self: center;
  text-align: center;
  white-space: nowrap;
}
.day {
  width: 99px;
  border-radius: 9px;
  background: #fdfcfd;
  font-size: 16px;
  line-height: 25px;
  font-weight: 500;
}
.notice {
  width: 392px;
  padding: 8px 0 9px;
  border-radius: 9px;
  background: #d5fdee;
  box-shadow: 0 0 1px rgba(0, 0, 0, .2);
  font-size: 17px;
  line-height: 25px;
}

.bubble {
  position: relative;
  border-radius: 16px;
  box-shadow: 0 1px 1px rgba(0, 0, 0, .06);
}
.in { align-self: flex-start; background: #fff; color: #fff; }
.out { align-self: flex-end; background: var(--out); color: var(--out); }
.tail { position: absolute; bottom: 0; width: 20px; height: 18px; }
.in .tail { left: -8px; }
.out .tail { right: -8px; transform: scaleX(-1); }
.text { color: #000; font-size: 22px; line-height: 30px; white-space: nowrap; }
.time {
  display: flex;
  align-items: center;
  gap: 4px;
  color: #858585;
  font-size: 16px;
  line-height: 18px;
  white-space: nowrap;
}
.out .time { color: #6f8d6d; }
.ticks { width: 22px; height: 15px; color: #5d735b; }

.short {
  width: 188px;
  height: 46px;
  padding: 6px 13px 8px 13px;
  display: flex;
  justify-content: space-between;
}
.short .time { align-self: flex-end; }

.body { display: grid; padding: 6px 14px 9px 13px; }
.body > * { grid-area: 1 / 1; }
.body .time { align-self: end; justify-self: end; }

.menu { width: 403px; }
.menu .body { padding-bottom: 8px; }
.choose {
  width: 100%;
  height: 59px;
  display: flex;
  justify-content: center;
  align-items: center;
  gap: 11px;
  position: relative;
  border-top: 1px solid #e4e4e4;
  color: #14874d;
  font-size: 20px;
}
.choose .list { width: 25px; height: 18px; }

.reply { width: 401px; padding: 4px 5px 0; }
.reply .body { padding: 8px 8px; }
.quote {
  height: 129px;
  padding: 13px 9px 0 11px;
  border-left: 6px solid #a0402a;
  border-radius: 8px;
  background: #d4f2cf;
  color: #2c352b;
}
.quote-head {
  display: flex;
  justify-content: space-between;
  font-size: 20px;
  line-height: 26px;
}
.quote-head b { font-weight: 600; color: #a33d22; }
.quote-head span { color: #6f8d6d; }
.quote p { padding-top: 4px; font-size: 17px; line-height: 24px; white-space: nowrap; }

.wait { width: 390px; }
.wait + .answer-row { margin-top: -11px; }
.answer-row { display: flex; gap: 12px; position: relative; }
.answer { width: 403px; padding-top: 28px; }
.answer .body { padding-top: 30px; }
.forward {
  width: 43px;
  height: 43px;
  margin-top: 29px;
  padding: 11px 10px 11px 11px;
  border-radius: 50%;
  background: #bbb9b7;
}

/* the latest messages sit at the bottom, the day label stays in view */
.scrolled .chat { justify-content: flex-end; }
.scrolled .day {
  position: absolute;
  top: 16px;
  left: 0;
  right: 0;
  z-index: 1;
  width: 56px;
  margin: 0 auto;
}

.shot { margin: 0 5px 0 4px; height: 50px; overflow: hidden; }
.shot table {
  width: 460px;
  margin-left: -24px;
  table-layout: fixed;
  border-collapse: collapse;
  font: 13px/15px "Open Sans", sans-serif;
  text-align: center;
  color: #333;
}
.shot th, .shot td { padding: 0; height: 24px; border: 2px solid #000; }
.shot th { background: #ffe290; font-weight: 700; color: #111; }
.shot th div {
  height: 22px;
  display: flex;
  align-items: center;
  justify-content: center;
  overflow: hidden;
}
.shot th:nth-child(1) { width: 90px; }
.shot th:nth-child(2) { width: 41px; }
.shot th:nth-child(3), .shot th:nth-child(4) { width: 88px; }
.shot th:nth-child(5) { width: 63px; }
.shot .red { background: #ff7b7b; }
.shot .blue { background: #7b7bff; }

/* message composer */
.composer {
  height: 107px;
  padding: 9px 19px 0 15px;
  display: flex;
  align-items: flex-start;
}
.composer > button { height: 43px; }
.plus { width: 28px; margin-right: 17px; }
.field {
  flex: 1;
  min-width: 0;
  height: 43px;
  padding-right: 14px;
  display: flex;
  align-items: center;
  border: 1px solid #d6d3d0;
  border-radius: 22px;
  background: #fff;
}
.field input {
  flex: 1;
  min-width: 0;
  height: 100%;
  padding: 0 16px;
  border: 0;
  outline: 0;
  background: none;
  font: 21px Inter, sans-serif;
}
.sticker { width: 26px; height: 26px; }
.camera { width: 32px; margin: 0 26px 0 25px; }
.mic { width: 22px; }
.plus svg { height: 28px; }
.camera svg { height: 26px; }
.mic svg { height: 31px; }
.composer > button svg { margin: auto; }

/* list picker */
.with-sheet .status { padding: 0 40px 0 52px; }
.with-sheet .nav { height: 62px; padding-left: 6px; }
.with-sheet .chat { padding: 47px 16px 0; gap: 19px; }
.with-sheet .notice { width: 397px; }
.with-sheet .short { width: 190px; }
.with-sheet .menu { width: 407px; }
.with-sheet .wallpaper { color: #e8d5c3; }
.scrim { position: absolute; inset: 0; background: rgba(0, 0, 0, .3); }
.sheet {
  position: absolute;
  inset: auto 0 0;
  padding-bottom: 34px;
  display: flex;
  flex-direction: column;
  border-radius: 16px 16px 0 0;
  background: #fff;
}
.sheet-head {
  height: 109px;
  margin-left: 4px;
  padding: 18px 16px 0 11px;
  display: grid;
  grid-template-columns: 41px 1fr 41px;
  border-bottom: 1px solid #e4e4e4;
}
.sheet-head h3 {
  grid-column: 2;
  font-size: 23px;
  line-height: 41px;
  font-weight: 600;
  text-align: center;
}
.close {
  width: 41px;
  height: 41px;
  padding: 11px;
  border-radius: 50%;
  background: #ececed;
}
.option {
  height: 104px;
  margin-left: 15px;
  padding: 0 21px 0 0;
  display: flex;
  align-items: center;
  border-bottom: 1px solid #e4e4e4;
}
.option-text { flex: 1; display: flex; flex-direction: column; }
.option-title { font-size: 23px; line-height: 29px; }
.option small { font-size: 17px; line-height: 26px; color: #727272; }
.option input { appearance: none; width: 0; height: 0; margin: 0; }
.check { width: 22px; height: 22px; visibility: hidden; }
.option input:checked + .check { visibility: visible; }
.send {
  height: 68px;
  margin: 22px 15px 0;
  padding-bottom: 4px;
  border-radius: 22px;
  background: var(--green);
  color: #fff;
  font-size: 22px;
  font-weight: 500;
}
```
